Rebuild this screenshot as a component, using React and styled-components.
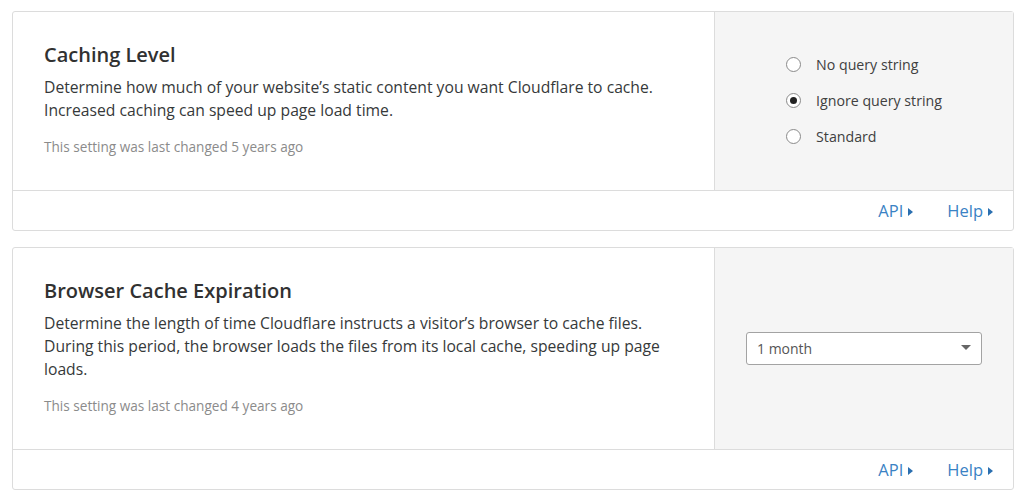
import React from 'react'
import styled, { createGlobalStyle } from 'styled-components'

const GlobalStyle = createGlobalStyle`
  html, body {
    margin: 0;
    padding: 0;
    background: #fff;
  }
  body {
    font-family: "Open Sans", "Noto Sans", sans-serif;
    color: #36393a;
  }
`

const settings = [
  {
    title: 'Caching Level',
    desc: 'Determine how much of your website’s static content you want Cloudflare to cache. Increased caching can speed up page load time.',
    changed: 'This setting was last changed 5 years ago',
    control: 'radios',
  },
  {
    title: 'Browser Cache Expiration',
    desc: 'Determine the length of time Cloudflare instructs a visitor’s browser to cache files. During this period, the browser loads the files from its local cache, speeding up page loads.',
    changed: 'This setting was last changed 4 years ago',
    control: 'select',
  },
]

const radioOptions = ['No query string', 'Ignore query string', 'Standard']

const App = () => {
  return (
    <Page>
      <GlobalStyle />
      {settings.map((s) => (
        <Card key={s.title}>
          <Body>
            <Info>
              <Title>{s.title}</Title>
              <Desc>{s.desc}</Desc>
              <Changed>{s.changed}</Changed>
            </Info>
            <Control>
              {s.control === 'radios' ? (
                <RadioGroup>
                  {radioOptions.map((o) => (
                    <RadioRow key={o}>
                      <Radio checked={o === 'Ignore query string'} />
                      <span>{o}</span>
                    </RadioRow>
                  ))}
                </RadioGroup>
              ) : (
                <Select>
                  <span>1 month</span>
                  <Caret />
                </Select>
              )}
            </Control>
          </Body>
          <Footer>
            <Link>API<Arrow /></Link>
            <Link>Help<Arrow /></Link>
          </Footer>
        </Card>
      ))}
    </Page>
  )
}

const Page = styled.div`
  padding: 11px 10px 10px 12px;
  display: flex;
  flex-direction: column;
  gap: 16px;
`
const Card = styled.div`
  border: 1px solid #dcdcdc;
  border-radius: 3px;
  background: #fff;
  display: flex;
  flex-direction: column;
`
const Body = styled.div`
  display: flex;
  border-bottom: 1px solid #dcdcdc;
`
const Info = styled.div`
  flex: 1;
  padding: 30px 40px 34px 31px;
  border-right: 1px solid #dcdcdc;
`
const Title = styled.h3`
  margin: 0 0 8px;
  font-size: 20px;
  font-weight: 600;
  line-height: 26px;
  color: #313131;
`
const Desc = styled.p`
  margin: 0;
  font-size: 15.7px;
  line-height: 23px;
  max-width: 640px;
`
const Changed = styled.p`
  margin: 16px 0 0;
  font-size: 13.6px;
  line-height: 18px;
  color: #8b8b8b;
`
const Control = styled.div`
  width: 298px;
  background: #f5f5f5;
  display: flex;
  align-items: center;
  justify-content: center;
`
const RadioGroup = styled.div`
  display: flex;
  flex-direction: column;
  gap: 15px;
  margin-top: -2px;
`
const RadioRow = styled.label`
  display: flex;
  align-items: center;
  gap: 15px;
  font-size: 14.2px;
  line-height: 21px;
  color: #404040;
`
const Radio = styled.span`
  width: 15px;
  height: 15px;
  border-radius: 50%;
  border: 1px solid #8a8a8a;
  background: #fff;
  box-sizing: border-box;
  display: flex;
  align-items: center;
  justify-content: center;
  &::after {
    content: '';
    width: 7px;
    height: 7px;
    border-radius: 50%;
    background: ${(p) => (p.checked ? '#222' : 'transparent')};
  }
`
const Select = styled.div`
  width: 236px;
  height: 33px;
  box-sizing: border-box;
  border: 1px solid #a3a3a3;
  border-radius: 3px;
  background: #fff;
  display: flex;
  align-items: center;
  justify-content: space-between;
  padding: 0 10px 0 10px;
  font-size: 14px;
  color: #555;
`
const Caret = styled.span`
  width: 0;
  height: 0;
  border-left: 5px solid transparent;
  border-right: 5px solid transparent;
  border-top: 5px solid #666;
  margin-top: -2px;
`
const Footer = styled.div`
  height: 39px;
  display: flex;
  align-items: center;
  justify-content: flex-end;
  gap: 34px;
  padding-right: 20px;
`
const Link = styled.a`
  display: flex;
  align-items: center;
  gap: 5px;
  font-size: 16.5px;
  color: #3a82c4;
  cursor: pointer;
`
const Arrow = styled.span`
  width: 0;
  height: 0;
  border-top: 4.5px solid transparent;
  border-bottom: 4.5px solid transparent;
  border-left: 5px solid #2b6fb0;
  margin-top: 2px;
`

export default App
